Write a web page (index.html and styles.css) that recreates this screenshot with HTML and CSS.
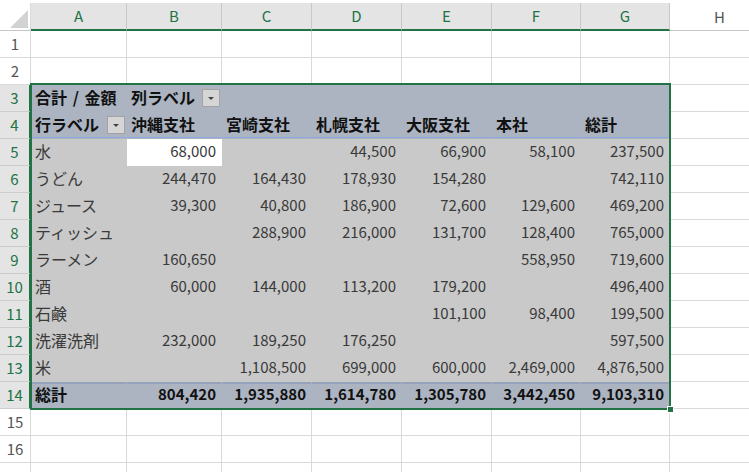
FILE: index.html
```html
<!DOCTYPE html>
<html lang="ja">
<head>
  <meta charset="UTF-8" />
  <title>ピボットテーブル</title>
  <link rel="stylesheet" href="styles.css">
</head>
<body>
  <div class="sheet-wrap">
    <table class="sheet">
      <colgroup>
        <col class="w-rh"><col class="w-a"><col class="w-b"><col class="w-c"><col class="w-d">
        <col class="w-e"><col class="w-f"><col class="w-g"><col class="w-h">
      </colgroup>
      <tr class="heads">
        <th class="corner"><svg width="20" height="20" viewBox="0 0 20 20"><polygon points="19,1 19,19 1,19" fill="#d2d2d2"/></svg></th>
        <th class="sel">A</th><th class="sel">B</th><th class="sel">C</th><th class="sel">D</th>
        <th class="sel">E</th><th class="sel">F</th><th class="sel">G</th><th>H</th>
      </tr>
      <tr><th class="rh">1</th><td></td><td></td><td></td><td></td><td></td><td></td><td></td><td></td></tr>
      <tr><th class="rh">2</th><td></td><td></td><td></td><td></td><td></td><td></td><td></td><td></td></tr>

      <tr class="pv-hd">
        <th class="rh sel">3</th>
        <td class="title">合計 / 金額</td>
        <td>列ラベル<span class="dd"></span></td>
        <td></td><td></td><td></td><td></td><td></td>
        <td class="out"></td>
      </tr>
      <tr class="pv-hd line-under">
        <th class="rh sel">4</th>
        <td>行ラベル<span class="dd"></span></td>
        <td>沖縄支社</td><td>宮崎支社</td><td>札幌支社</td><td>大阪支社</td><td>本社</td><td>総計</td>
        <td class="out"></td>
      </tr>

      <tr class="pv">
        <th class="rh sel">5</th><td>水</td>
        <td class="num cur">68,000</td><td class="num"></td><td class="num">44,500</td>
        <td class="num">66,900</td><td class="num">58,100</td><td class="num">237,500</td>
        <td class="out"></td>
      </tr>
      <tr class="pv">
        <th class="rh sel">6</th><td>うどん</td>
        <td class="num">244,470</td><td class="num">164,430</td><td class="num">178,930</td>
        <td class="num">154,280</td><td class="num"></td><td class="num">742,110</td>
        <td class="out"></td>
      </tr>
      <tr class="pv">
        <th class="rh sel">7</th><td>ジュース</td>
        <td class="num">39,300</td><td class="num">40,800</td><td class="num">186,900</td>
        <td class="num">72,600</td><td class="num">129,600</td><td class="num">469,200</td>
        <td class="out"></td>
      </tr>
      <tr class="pv">
        <th class="rh sel">8</th><td>ティッシュ</td>
        <td class="num"></td><td class="num">288,900</td><td class="num">216,000</td>
        <td class="num">131,700</td><td class="num">128,400</td><td class="num">765,000</td>
        <td class="out"></td>
      </tr>
      <tr class="pv">
        <th class="rh sel">9</th><td>ラーメン</td>
        <td class="num">160,650</td><td class="num"></td><td class="num"></td>
        <td class="num"></td><td class="num">558,950</td><td class="num">719,600</td>
        <td class="out"></td>
      </tr>
      <tr class="pv">
        <th class="rh sel">10</th><td>酒</td>
        <td class="num">60,000</td><td class="num">144,000</td><td class="num">113,200</td>
        <td class="num">179,200</td><td class="num"></td><td class="num">496,400</td>
        <td class="out"></td>
      </tr>
      <tr class="pv">
        <th class="rh sel">11</th><td>石鹸</td>
        <td class="num"></td><td class="num"></td><td class="num"></td>
        <td class="num">101,100</td><td class="num">98,400</td><td class="num">199,500</td>
        <td class="out"></td>
      </tr>
      <tr class="pv">
        <th class="rh sel">12</th><td>洗濯洗剤</td>
        <td class="num">232,000</td><td class="num">189,250</td><td class="num">176,250</td>
        <td class="num"></td><td class="num"></td><td class="num">597,500</td>
        <td class="out"></td>
      </tr>
      <tr class="pv">
        <th class="rh sel">13</th><td>米</td>
        <td class="num"></td><td class="num">1,108,500</td><td class="num">699,000</td>
        <td class="num">600,000</td><td class="num">2,469,000</td><td class="num">4,876,500</td>
        <td class="out"></td>
      </tr>
      <tr class="pv-tot">
        <th class="rh sel">14</th><td>総計</td>
        <td class="num">804,420</td><td class="num">1,935,880</td><td class="num">1,614,780</td>
        <td class="num">1,305,780</td><td class="num">3,442,450</td><td class="num">9,103,310</td>
        <td class="out"></td>
      </tr>

      <tr><th class="rh">15</th><td></td><td></td><td></td><td></td><td></td><td></td><td></td><td></td></tr>
      <tr><th class="rh">16</th><td></td><td></td><td></td><td></td><td></td><td></td><td></td><td></td></tr>
      <tr><th class="rh"></th><td></td><td></td><td></td><td></td><td></td><td></td><td></td><td></td></tr>
    </table>

    <!-- selection outline over A3:G14 -->
    <div class="selection"><span class="handle"></span></div>
  </div>
</body>
</html>
```

FILE: styles.css
```css
* {
  box-sizing: border-box;
  margin: 0;
  padding: 0;
}

html, body {
  overflow: hidden;
}

body {
  background-color: #fff;
  color: #3a3a3a;
  font-family: "Noto Sans CJK JP", "Noto Sans", sans-serif;
  font-size: 15px;
}

.sheet-wrap {
  position: relative;
  padding-top: 3px;
}

.sheet {
  border-collapse: separate;
  border-spacing: 0;
  table-layout: fixed;
  width: 770px;
}

.w-rh { width: 31px; }
.w-a { width: 96px; }
.w-b { width: 95px; }
.w-c, .w-d, .w-e { width: 90px; }
.w-f, .w-g { width: 89px; }
.w-h { width: 100px; }

.sheet tr {
  height: 27px;
}

.sheet td,
.sheet th {
  height: 27px;
  padding: 0 4px;
  border-right: 1px solid #dadada;
  border-bottom: 1px solid #dadada;
  white-space: nowrap;
  overflow: hidden;
  font-weight: normal;
  vertical-align: middle;
  line-height: 26px;
}

.sheet td {
  font-size: 16px;
  vertical-align: top;
  line-height: 24px;
}

.sheet td.title {
  word-spacing: 2px;
}

/* column letters */
.heads th {
  text-align: center;
  color: #555;
  background-color: #fff;
  border-right-color: #cfcfcf;
  border-bottom-color: #c6c6c6;
}

.heads th.sel {
  background-color: #e4e4e4;
  color: #217346;
  border-right-color: #c8c8c8;
  border-bottom: 2px solid #217346;
}

.heads th.corner {
  padding: 0;
  background-color: #fff;
  border-right-color: #dadada;
  line-height: 0;
  text-align: right;
  vertical-align: bottom;
}

.corner svg {
  margin: 0 1px 1px 0;
}

/* row numbers */
.rh {
  padding: 0;
  text-align: center;
  color: #555;
  background-color: #fff;
  border-right-color: #cfcfcf;
}

.rh.sel {
  background-color: #e4e4e4;
  color: #217346;
  border-bottom-color: #cdcdcd;
  border-right: 2px solid #217346;
}

/* pivot table */
.pv-hd td,
.pv-tot td {
  background-color: #acb4c2;
  border-color: transparent;
  color: #111;
  font-weight: bold;
}

.pv td {
  background-color: #c9c9c9;
  border-color: transparent;
}

.line-under td {
  box-shadow: inset 0 -1px 0 #8ea9db;
}

.pv-tot td {
  box-shadow: inset 0 2px 0 #95a3bb;
}

.sheet td.out {
  background-color: #fff;
  border-right-color: #dadada;
  border-bottom-color: #dadada;
  box-shadow: none;
}

.sheet td.num {
  font-size: 15px;
  text-align: right;
  padding-right: 5px;
}

.sheet td.cur {
  background-color: #fff;
}

.dd {
  float: right;
  position: relative;
  width: 18px;
  height: 18px;
  margin: 4px -3px 0 0;
  background-color: #d5d5d5;
  border: 1px solid #a3a3a3;
}

.dd::after {
  content: "";
  position: absolute;
  left: 5px;
  top: 7px;
  border-left: 3px solid transparent;
  border-right: 3px solid transparent;
  border-top: 3px solid #444;
}

.selection {
  position: absolute;
  left: 30px;
  top: 83px;
  width: 641px;
  height: 327px;
  border: 2px solid #217346;
  pointer-events: none;
}

.handle {
  position: absolute;
  right: -5px;
  bottom: -5px;
  width: 7px;
  height: 7px;
  background-color: #217346;
  border: 1px solid #fff;
}
```
